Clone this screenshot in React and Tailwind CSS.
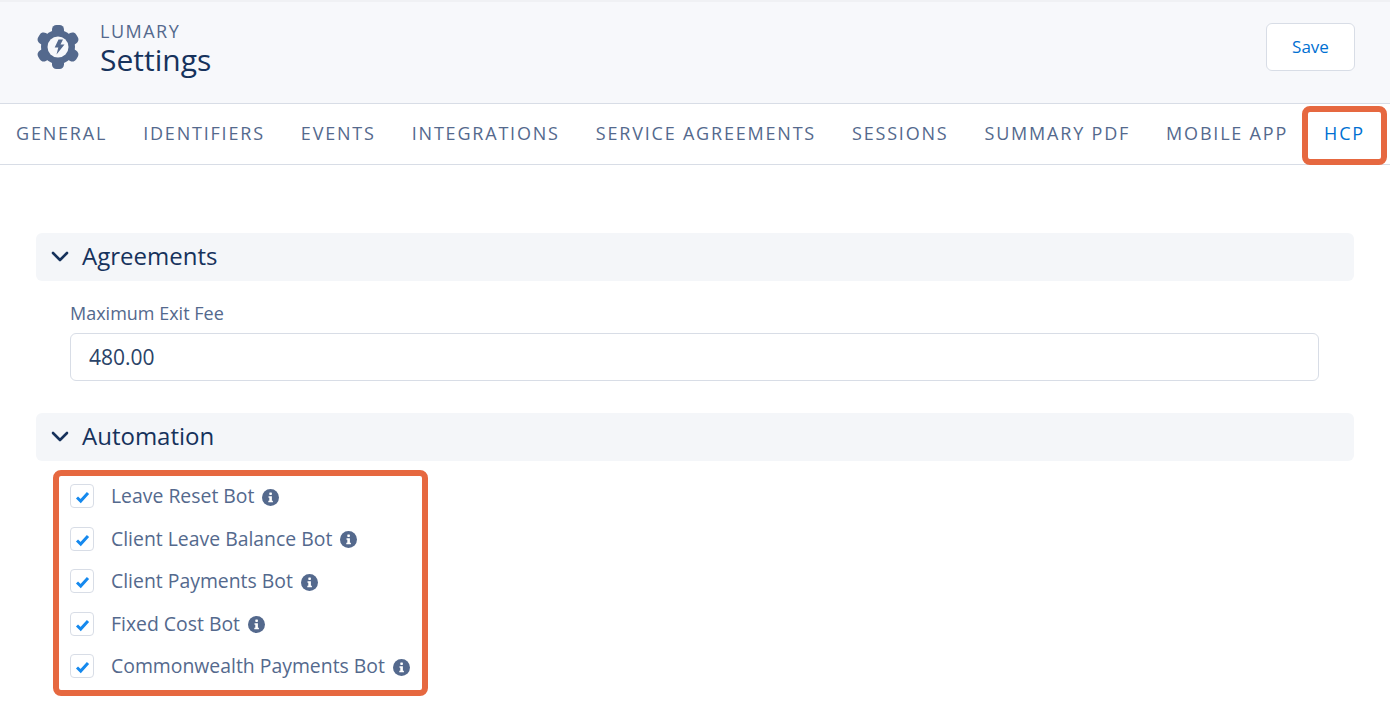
const tabs = ['General', 'Identifiers', 'Events', 'Integrations', 'Service Agreements', 'Sessions', 'Summary PDF', 'Mobile App'];
const bots = ['Leave Reset Bot', 'Client Leave Balance Bot', 'Client Payments Bot', 'Fixed Cost Bot', 'Commonwealth Payments Bot'];

function GearIcon() {
  return (
    <svg width="44" height="46" viewBox="0 0 44 46">
      <g fill="#54698d">
        <circle cx="22" cy="23" r="17" />
        {[0, 60, 120, 180, 240, 300].map((a) => (
          <rect key={a} x="16" y="1" width="12" height="14" rx="4.500" transform={`rotate(${a} 22 23)`} />
        ))}
      </g>
      <circle cx="22" cy="23" r="10.500" fill="#f7f8fb" />
      <path fill="#54698d" d="M22.500 15.500h4.500l-2.500 5h4l-8 10 1.800-7h-3.600Z" />
    </svg>
  );
}

function InfoDot() {
  return (
    <svg width="17" height="17" viewBox="0 0 17 17" className="shrink-0">
      <circle cx="8.500" cy="8.500" r="8.500" fill="#54698d" />
      <rect x="7.300" y="3.500" width="2.600" height="2.400" rx="0.600" fill="#fff" />
      <path fill="#fff" d="M6.500 7.200h3.400v4.600h1v1.500H6.300v-1.500h1V8.700h-.8Z" />
    </svg>
  );
}

function SectionBar({ title }) {
  return (
    <div className="flex items-center h-12 rounded-md bg-[#f4f6f9] pl-[15px]">
      <svg width="18" height="12" viewBox="0 0 18 12" fill="none" stroke="#16325c" strokeWidth="2.600" strokeLinecap="round" strokeLinejoin="round">
        <polyline points="2,2 9,9 16,2" />
      </svg>
      <span className="ml-[13px] pb-[2px] text-[24px] text-[#16325c]">{title}</span>
    </div>
  );
}

export default function App() {
  return (
    <div
      className="relative h-[704px] overflow-hidden bg-white"
      style={{ fontFamily: '"Open Sans", "Noto Sans", sans-serif' }}
    >
      <header className="flex items-center justify-between h-[104px] bg-[#f7f8fb] border-b border-[#d8dde6] border-t-2 border-t-[#f0f1f4] pl-[36px] pr-[35px] pb-[11px]">
        <div className="flex items-center gap-[20px]">
          <GearIcon />
          <div className="flex flex-col pt-[4px]">
            <span className="text-[18px] leading-[22px] tracking-[1.500px] text-[#54698d]">LUMARY</span>
            <span className="text-[30px] leading-[36px] text-[#16325c]">Settings</span>
          </div>
        </div>
        <button className="w-[89px] h-12 rounded-md border border-[#d8dde6] bg-white text-[17px] text-[#0070d2]">
          Save
        </button>
      </header>

      <nav className="flex items-center gap-[36px] h-[61px] pl-[16px] pb-[2px] border-b border-[#d8dde6]">
        {tabs.map((t) => (
          <span key={t} className="uppercase text-[18px] tracking-[1.800px] text-[#54698d]">{t}</span>
        ))}
        <span className="uppercase text-[18px] tracking-[1.800px] text-[#0070d2]">HCP</span>
      </nav>

      <main className="pt-[68px] pl-[36px] pr-[36px]">
        <SectionBar title="Agreements" />
        <div className="pl-[34px] pr-[35px] pt-[21px] pb-[32px]">
          <label className="block text-[18px] leading-[22px] text-[#54698d] mb-[9px]">Maximum Exit Fee</label>
          <div className="flex items-center h-12 rounded-md border border-[#d8dde6] pl-[18px] pt-[1px] text-[21px] text-[#2a4368]">
            480.00
          </div>
        </div>
        <SectionBar title="Automation" />
        <ul className="pl-[34px] pt-[23px] flex flex-col gap-[18.500px]">
          {bots.map((b) => (
            <li key={b} className="flex items-center h-6">
              <span className="flex items-center justify-center w-6 h-6 rounded-[4px] border border-[#d8dde6] bg-white">
                <svg width="22" height="22" viewBox="0 0 22 22" fill="none" stroke="#1589ee" strokeWidth="3">
                  <polyline points="6,12.500 9.700,16 17,8" />
                </svg>
              </span>
              <span className="ml-[17px] text-[19.400px] text-[#54698d]">{b}</span>
              <span className="ml-[8px] pt-[2px]"><InfoDot /></span>
            </li>
          ))}
        </ul>
      </main>

      {/* annotation boxes drawn over the screenshot */}
      <div className="absolute left-[1302px] top-[106px] w-[85px] h-[59px] rounded-[8px] border-[6px] border-[#e66840]" />
      <div className="absolute left-[53px] top-[470px] w-[375px] h-[226px] rounded-[8px] border-[6px] border-[#e66840]" />
    </div>
  );
}
